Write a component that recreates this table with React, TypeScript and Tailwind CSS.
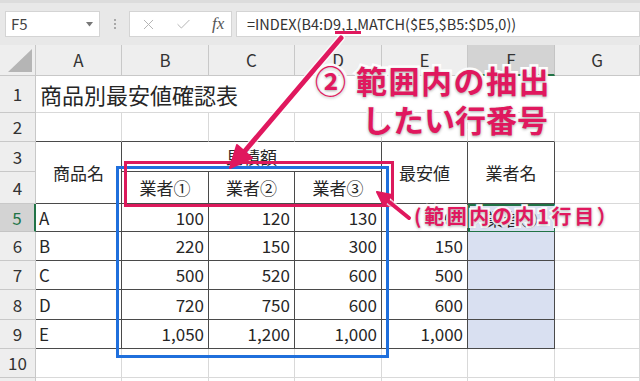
import { Check, X } from 'lucide-react';

const CJK = "font-['Noto_Sans_CJK_JP','Noto_Sans',sans-serif]";

const COLS = ['A', 'B', 'C', 'D', 'E', 'F', 'G'] as const;

const DataRows = [
    { n: 5, name: 'A', v: ['100', '120', '130'], min: '100' },
    { n: 6, name: 'B', v: ['220', '150', '300'], min: '150' },
    { n: 7, name: 'C', v: ['500', '520', '600'], min: '500' },
    { n: 8, name: 'D', v: ['720', '750', '600'], min: '600' },
    { n: 9, name: 'E', v: ['1,050', '1,200', '1,000'], min: '1,000' },
] as const;

const base = 'flex items-center border-r border-b text-[17px] text-[#262626] overflow-hidden whitespace-nowrap';
const grid = 'border-[#d9d9d9]';
const dark = 'border-[#4a4a4a]';

const RowHead = ({ n, active }: { n?: number; active?: boolean }) => (
    <div
        className={
            active
                ? 'flex items-center justify-center border-b border-r-2 border-b-[#c4c4c4] border-r-[#217346] bg-[#d3d3d3] text-[17px] text-[#217346]'
                : 'flex items-center justify-center border-r border-b border-[#c8c8c8] bg-[#eeeeee] text-[17px] text-[#333]'
        }
    >
        {n}
    </div>
);

const App = () => {
    return (
        <div className={`relative h-[381px] w-[640px] overflow-hidden bg-white ${CJK}`}>
            {/* formula bar */}
            <div className="flex h-[45px] items-start border-t-[3px] border-[#dcdcdc] bg-[#e8e8e8] pt-[8px]">
                <div className="ml-[5px] flex h-[26px] w-[95px] items-center justify-between border border-[#d4d4d4] bg-white pl-[5px] pr-[6px] text-[15px] text-[#444]">
                    F5
                    <svg width="7" height="5" viewBox="0 0 7 5">
                        <polygon points="0,0 7,0 3.5,4.5" fill="#777" />
                    </svg>
                </div>
                <div className="flex h-[26px] w-[29px] flex-col items-center justify-center gap-[2px]">
                    <span className="h-[2px] w-[2px] bg-[#a8a8a8]" />
                    <span className="h-[2px] w-[2px] bg-[#a8a8a8]" />
                    <span className="h-[2px] w-[2px] bg-[#a8a8a8]" />
                </div>
                <div className="flex h-[26px] w-[103px] items-center border border-[#d4d4d4] bg-white pl-[10px]">
                    <X size={17} strokeWidth={1.4} color="#b4b4b4" />
                    <Check size={17} strokeWidth={1.4} color="#b4b4b4" className="ml-[18px]" />
                    <span className="ml-[20px] font-['Liberation_Serif',serif] text-[17px] italic text-[#555]">
                        fx
                    </span>
                </div>
                <div className="ml-[4px] flex h-[26px] flex-1 items-center border border-[#d4d4d4] bg-white pl-[10px] text-[14.5px] text-[#333]">
                    =INDEX(B4:D9,1,MATCH($E5,$B5:$D5,0))
                </div>
            </div>

            {/* sheet */}
            <div className="grid grid-cols-[36px_86px_87px_86px_87px_86px_87px_85px] grid-rows-[31px_37px_29px_30px_32px_28px_29px_29px_30px_29px_29px_29px]">
                <div className="flex items-end justify-end border-r border-b border-[#c8c8c8] bg-[#eeeeee] pr-[3px] pb-[3px]">
                    <svg width="24" height="23" viewBox="0 0 24 23">
                        <polygon points="24,0 24,23 0,23" fill="#b5b5b5" />
                    </svg>
                </div>
                {COLS.map(c => (
                    <div
                        key={c}
                        className={
                            c === 'F'
                                ? 'flex items-center justify-center border-r border-b-2 border-r-[#c4c4c4] border-b-[#217346] bg-[#d3d3d3] text-[17px] text-[#333]'
                                : 'flex items-center justify-center border-r border-b border-[#c8c8c8] bg-[#eeeeee] text-[17px] text-[#333]'
                        }
                    >
                        {c}
                    </div>
                ))}

                {/* row 1 */}
                <RowHead n={1} />
                <div className={`${base} ${grid} col-span-7 border-r-0 pl-[4px] text-[22px]`}>
                    商品別最安値確認表
                </div>

                {/* row 2 */}
                <RowHead n={2} />
                {COLS.map(c => (
                    <div key={c} className={`${base} ${c === 'G' ? grid : 'border-r-[#d9d9d9] border-b-[#4a4a4a]'}`} />
                ))}

                {/* rows 3-4 */}
                <RowHead n={3} />
                <div className={`${base} ${dark} row-span-2 justify-center`}>商品名</div>
                <div className={`${base} ${dark} col-span-3 justify-center`}>見積額</div>
                <div className={`${base} ${dark} row-span-2 justify-center`}>最安値</div>
                <div className={`${base} ${dark} row-span-2 justify-center`}>業者名</div>
                <div className={`${base} ${grid}`} />
                <RowHead n={4} />
                <div className={`${base} ${dark} justify-center`}>業者①</div>
                <div className={`${base} ${dark} justify-center`}>業者②</div>
                <div className={`${base} ${dark} justify-center`}>業者③</div>
                <div className={`${base} ${grid}`} />

                {DataRows.map(r => (
                    <div key={r.n} className="contents">
                        <RowHead n={r.n} active={r.n === 5} />
                        <div className={`${base} ${dark} pl-[3px]`}>{r.name}</div>
                        {r.v.map((v, i) => (
                            <div key={i} className={`${base} ${dark} justify-end pr-[4px]`}>
                                {v}
                            </div>
                        ))}
                        <div className={`${base} ${dark} justify-end pr-[4px]`}>{r.min}</div>
                        <div
                            className={
                                r.n === 5
                                    ? `${base} justify-center border-2 border-[#217346] bg-[#d9e0f1] text-[#9a9a9a]`
                                    : `${base} ${dark} bg-[#d9e0f1]`
                            }
                        >
                            {r.n === 5 ? '業者①' : null}
                        </div>
                        <div className={`${base} ${grid}`} />
                    </div>
                ))}

                {[10, 11].map(n => (
                    <div key={n} className="contents">
                        <RowHead n={n === 10 ? n : undefined} />
                        {COLS.map(c => (
                            <div key={c} className={`${base} ${grid}`} />
                        ))}
                    </div>
                ))}
            </div>

            {/* overlays */}
            <div className="absolute left-[335px] top-[31px] h-[3px] w-[26px] bg-[#e0185e]" />
            <div className="pointer-events-none absolute left-[116px] top-[166px] h-[192px] w-[273px] border-[3px] border-[#1f6fdc]" />
            <div className="pointer-events-none absolute left-[124px] top-[161px] h-[46px] w-[270px] border-[3px] border-[#dc1a5c]" />

            <svg className="pointer-events-none absolute left-0 top-0" width="640" height="381" viewBox="0 0 640 381">
                <line x1="341" y1="38" x2="245" y2="151" stroke="#fff" strokeWidth="8" strokeLinecap="round" opacity="0.7" />
                <line x1="341" y1="38" x2="244" y2="152" stroke="#e0185e" strokeWidth="5" strokeLinecap="round" />
                <polygon points="230,168 252,158 237,145" fill="#e0185e" stroke="#e0185e" strokeWidth="2" strokeLinejoin="round" />
                <line x1="409" y1="218" x2="388" y2="201" stroke="#fff" strokeWidth="7" strokeLinecap="round" opacity="0.7" />
                <line x1="409" y1="218" x2="388" y2="201" stroke="#e0185e" strokeWidth="4" strokeLinecap="round" />
                <polygon points="377,192 392,195 384,206" fill="#e0185e" stroke="#e0185e" strokeWidth="2" strokeLinejoin="round" />
            </svg>

            <div className="absolute left-[315px] top-[64px] flex items-center text-[31px] font-bold leading-none text-[#e0185e] [-webkit-text-stroke:5px_white] [paint-order:stroke_fill] [text-shadow:0_1px_3px_rgba(0,0,0,0.35)]">
                <span>②</span>
                <span className="ml-[10px] tracking-[1.5px]">範囲内の抽出</span>
            </div>
            <div className="absolute left-[362px] top-[103px] text-[31px] font-bold leading-none text-[#e0185e] [-webkit-text-stroke:5px_white] [paint-order:stroke_fill] [text-shadow:0_1px_3px_rgba(0,0,0,0.35)]">
                したい行番号
            </div>
            <div className="absolute left-[414px] top-[206px] text-[20px] font-bold leading-none tracking-[2.6px] text-[#e0185e] [-webkit-text-stroke:4px_white] [paint-order:stroke_fill] [text-shadow:0_1px_3px_rgba(0,0,0,0.35)]">
                (範囲内の内1行目）
            </div>
        </div>
    );
};

export default App;
